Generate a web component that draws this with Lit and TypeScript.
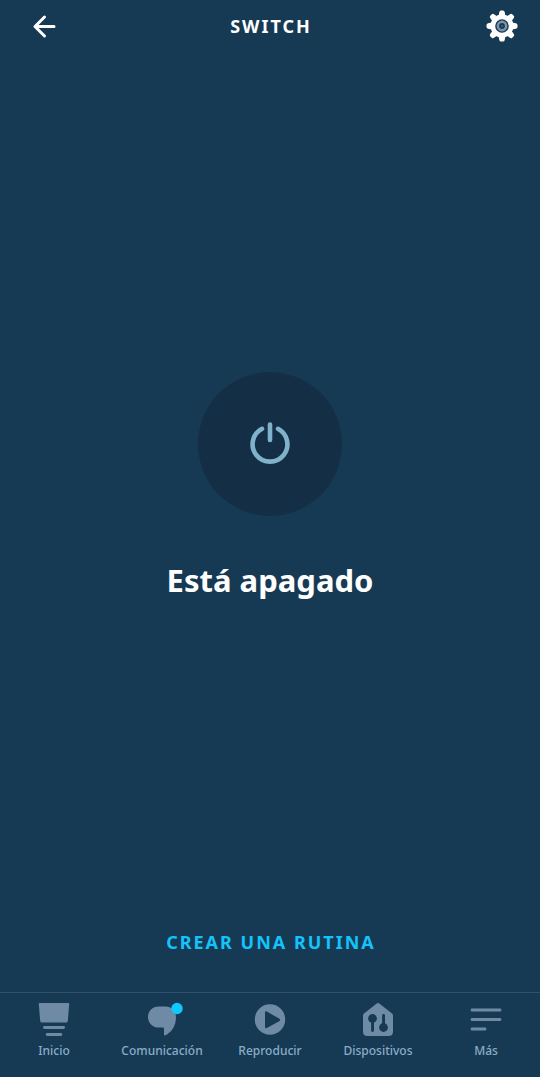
import { LitElement, html, css, svg } from "lit";
import { customElement, state } from "lit/decorators.js";

const icons = {
  home: svg`
    <path d="M3.6 2H32.4Q33.3 2 33.2 3L31.8 20Q31.6 21.500 30.300 21.500H5.700Q4.400 21.500 4.200 20L2.800 3Q2.700 2 3.600 2Z"/>
    <rect x="7" y="25" width="22" height="3" rx="1.400"/>
    <rect x="9.800" y="32" width="16.400" height="3" rx="1.400"/>`,
  chat: svg`
    <path d="M14.600 5.500H21.500C27.500 5.500 32 10 32 16C32 25 27.500 31.500 21 34.400Q20 34.800 20 33.800V27.800Q20 26.600 18.800 26.600H14.600C8.500 26.600 4 22 4 16C4 10 8.500 5.500 14.600 5.500Z"/>
    <circle class="dot" cx="33" cy="7.500" r="5.700"/>`,
  play: svg`
    <path fill-rule="evenodd" d="M18 3.300A15.200 15.200 0 1 1 18 33.700A15.200 15.200 0 1 1 18 3.300ZM13 11.600V25.800Q13 27.800 14.800 26.900L27.200 20.200Q29 18.900 27.200 17.600L14.800 10.500Q13 9.600 13 11.600Z"/>`,
  devices: svg`
    <path d="M16.700 2.600Q18 1.600 19.300 2.600L32 12.600Q33 13.400 33 14.800V30.500Q33 35 28.500 35H7.500Q3 35 3 30.500V14.800Q3 13.400 4 12.600Z"/>
    <g class="cut">
      <circle cx="12.500" cy="17.500" r="4.400"/>
      <rect x="11.100" y="17.500" width="2.900" height="13.500" rx="1.400"/>
      <circle cx="23.500" cy="26.500" r="4.400"/>
      <rect x="22.100" y="13" width="2.900" height="13.500" rx="1.400"/>
    </g>`,
  more: svg`
    <rect x="2.700" y="7.500" width="30.600" height="3" rx="1.200"/>
    <rect x="2.700" y="17" width="30.600" height="3" rx="1.200"/>
    <rect x="2.700" y="26.500" width="15.600" height="3" rx="1.200"/>`,
};

const tabs = [
  { label: "Inicio", icon: icons.home },
  { label: "Comunicación", icon: icons.chat },
  { label: "Reproducir", icon: icons.play },
  { label: "Dispositivos", icon: icons.devices },
  { label: "Más", icon: icons.more },
];

// Eight rounded teeth around the gear body.
const teeth = [0, 45, 90, 135, 180, 225, 270, 315];

@customElement("app-root")
export class AppRoot extends LitElement {
  static styles = css`
    :host {
      display: flex;
      flex-direction: column;
      min-height: 100vh;
      background: #173a54;
      color: #fff;
      font-family: "Noto Sans", "Open Sans", sans-serif;
    }
    svg {
      display: block;
    }
    button {
      border: 0;
      padding: 0;
      background: none;
      color: inherit;
      font: inherit;
      cursor: pointer;
    }
    .bar {
      display: grid;
      grid-template-columns: 60px 1fr 60px;
      align-items: center;
      justify-items: center;
      height: 52px;
      padding: 0 14px;
    }
    .icon-button {
      display: grid;
      place-items: center;
      width: 48px;
      height: 48px;
    }
    .settings {
      justify-self: end;
    }
    .title {
      margin: 0;
      padding-left: 2px;
      font-size: 18px;
      line-height: 24px;
      font-weight: 700;
      letter-spacing: 2px;
    }
    .status {
      flex: 1;
      display: flex;
      flex-direction: column;
      align-items: center;
      justify-content: center;
      gap: 40px;
    }
    .power {
      display: grid;
      place-items: center;
      width: 144px;
      height: 144px;
      border-radius: 50%;
      background: #142f45;
    }
    .state {
      margin: 0;
      font-size: 31px;
      line-height: 48px;
      font-weight: 700;
    }
    .routine {
      align-self: center;
      margin-bottom: 32px;
      padding-left: 2px;
      color: #14c3fb;
      font-size: 18px;
      line-height: 36px;
      font-weight: 700;
      letter-spacing: 2px;
      text-decoration: none;
    }
    .tabs {
      display: grid;
      grid-template-columns: repeat(5, 1fr);
      padding: 8px 0 18px;
      border-top: 1px solid #31526d;
    }
    .tab {
      display: flex;
      flex-direction: column;
      align-items: center;
      gap: 6px;
      color: #8bacc8;
      font-size: 12px;
      line-height: 16px;
      font-weight: 500;
      text-decoration: none;
    }
    .tab svg {
      fill: #6e8aa5;
      overflow: visible;
    }
    .tab .dot {
      fill: #0fc8fd;
    }
    .tab .cut {
      fill: #173a54;
    }
  `;

  @state() private on = false;

  render() {
    return html`
      <header class="bar">
        <button class="icon-button" aria-label="Atrás">
          <svg width="28" height="28" viewBox="0 0 28 28" fill="none" stroke="#fff" stroke-width="3" stroke-linecap="round" stroke-linejoin="round">
            <path d="M24 14.500H5M14.500 5L5 14.500L14.500 24"/>
          </svg>
        </button>
        <h1 class="title">SWITCH</h1>
        <button class="icon-button settings" aria-label="Ajustes">
          <svg width="32" height="32" viewBox="-16 -16 32 32">
            <circle r="11.500" fill="#fff"/>
            ${teeth.map(
              (angle) => svg`<path transform="rotate(${angle})" fill="#fff" d="M-3.400 -10L-2.700 -14Q-2.300 -15.500 -1 -15.500H1Q2.300 -15.500 2.700 -14L3.400 -10Z"/>`
            )}
            <circle r="6.100" fill="#7c93aa" stroke="#173a54" stroke-width="1.400"/>
            <circle r="2.900" fill="#173a54"/>
            <circle r="1" fill="#4d6880"/>
          </svg>
        </button>
      </header>
      <main class="status">
        <button class="power" aria-label="Encender" aria-pressed=${this.on} @click=${() => (this.on = !this.on)}>
          <svg width="48" height="48" viewBox="0 0 48 48" fill="none" stroke="#80b3cb" stroke-width="4.600" stroke-linecap="round">
            <path d="M16 8.800A17.400 17.400 0 1 0 32 8.800M24 4.500V20"/>
          </svg>
        </button>
        <h2 class="state">${this.on ? "Está encendido" : "Está apagado"}</h2>
      </main>
      <a class="routine" href="#rutina">CREAR UNA RUTINA</a>
      <nav class="tabs">
        ${tabs.map(
          (tab) => html`
            <a class="tab" href="#">
              <svg width="36" height="36" viewBox="0 0 36 36" aria-hidden="true">${tab.icon}</svg>
              <span>${tab.label}</span>
            </a>
          `
        )}
      </nav>
    `;
  }
}
